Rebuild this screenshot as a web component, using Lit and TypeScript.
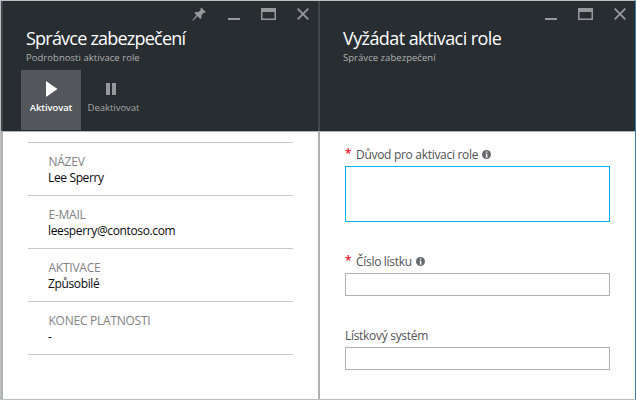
import { LitElement, html, css, svg, nothing } from "lit";
import { customElement, property } from "lit/decorators.js";

const glyphs = {
  pin: svg`<path d="M10.2 0.6 L14.8 5 L13.9 5.9 L13 5.6 L10.6 8 L10.3 11 L9.3 11.9 L6.5 9.3 L2.2 13.5 L1.4 13.6 L1.6 12.8 L5.4 8.2 L3.6 6 L4.4 5.1 L7.5 5.1 L9.9 2.7 L9.4 1.5 Z" fill="currentColor"/>`,
  min: svg`<path d="M2 11h12v2H2z" fill="currentColor"/>`,
  max: svg`<path fill-rule="evenodd" d="M0 1h15v12H0z M1.5 5v6.6h12V5z" fill="currentColor"/>`,
  close: svg`<path d="M1.7 1.7L12.3 12.3M12.3 1.7L1.7 12.3" stroke="currentColor" stroke-width="1.8" fill="none"/>`,
};

@customElement("window-icon")
class WindowIcon extends LitElement {
  @property() name: keyof typeof glyphs = "close";
  static styles = css`
    :host { display: block; width: 15px; height: 14px; color: #96999b; }
    svg { display: block; }
  `;
  render() {
    return html`<svg width="15" height="14" viewBox="0 0 15 14">${glyphs[this.name]}</svg>`;
  }
}

@customElement("blade-panel")
class BladePanel extends LitElement {
  @property() heading = "";
  @property() subheading = "";
  @property({ type: Boolean }) pinnable = false;
  static styles = css`
    :host { display: flex; flex-direction: column; min-width: 0; box-sizing: border-box; }
    header { height: 130px; background: #282d31; color: #fff; box-sizing: border-box; border-left: 2px solid #41474a; }
    .controls { display: flex; justify-content: flex-end; gap: 20px; height: 19px; padding: 6px 7px 0 0; box-sizing: border-box; }
    h1 { margin: 6px 0 0 23px; font-size: 18px; line-height: 25px; font-weight: 400; white-space: nowrap; letter-spacing: var(--title-spacing, -0.78px); }
    p { margin: 0 0 0 23px; font-size: 9.5px; line-height: 13px; height: 14px; color: #b0b2b3; white-space: nowrap; letter-spacing: 0.04px; }
    .body { flex: 1; border-top: 1px solid #aeafb1; border-left: 2px solid #b0b0b1; background: #fefefe; }
  `;
  render() {
    return html`
      <header>
        <div class="controls">
          ${this.pinnable ? html`<window-icon name="pin"></window-icon>` : nothing}
          <window-icon name="min"></window-icon>
          <window-icon name="max"></window-icon>
          <window-icon name="close"></window-icon>
        </div>
        <h1>${this.heading}</h1>
        <p>${this.subheading}</p>
        <slot name="toolbar"></slot>
      </header>
      <div class="body"><slot></slot></div>
    `;
  }
}

@customElement("form-field")
class FormField extends LitElement {
  @property() label = "";
  @property({ type: Boolean }) required = false;
  @property({ type: Boolean, reflect: true }) multiline = false;
  static styles = css`
    :host { display: block; }
    .label { display: flex; align-items: center; height: 18px; margin-bottom: 3px; font-size: 12px; color: #505254; white-space: nowrap; }
    .text { letter-spacing: -0.3px; }
    .star { width: 11px; color: #e81123; font-size: 12px; line-height: 16px; font-weight: 600; }
    svg { margin-left: 4px; }
    .box { display: block; width: 265px; height: 23px; box-sizing: border-box; margin: 0; padding: 2px 4px; border: 1px solid #afb0b1; border-radius: 0; background: #fefefe; outline: none; resize: none; font: inherit; }
    :host([multiline]) .box { height: 56px; border-color: #00b4ed; }
  `;
  render() {
    return html`
      <div class="label">
        ${this.required ? html`<span class="star">*</span>` : nothing}
        <span class="text">${this.label}</span>
        ${this.required
          ? html`<svg width="9" height="9" viewBox="0 0 9 9"><circle cx="4.5" cy="4.5" r="4.5" fill="#66696c"/><path d="M4 1.5h1.3v1.3H4zM3.5 3.7h1.8v3h.5v.8H3.5v-.8H4V4.5h-.5z" fill="#fff"/></svg>`
          : nothing}
      </div>
      ${this.multiline ? html`<textarea class="box"></textarea>` : html`<input class="box" />`}
    `;
  }
}

const details = [
  { label: "NÁZEV", value: "Lee Sperry" },
  { label: "E-MAIL", value: "leesperry@contoso.com" },
  { label: "AKTIVACE", value: "Způsobilé" },
  { label: "KONEC PLATNOSTI", value: "-" },
];

@customElement("app-root")
class AppRoot extends LitElement {
  static styles = css`
    :host { display: flex; width: 636px; height: 400px; box-sizing: border-box; overflow: hidden; background: #fefefe; border: solid #bcc0c0; border-width: 1px 0 1px 1px; border-right: 1px solid #3a80a0; font-family: "Open Sans", "Noto Sans", sans-serif; }
    .details { width: 317px; flex: none; }
    .request { flex: 1; --title-spacing: -0.58px; }
    .toolbar { display: flex; margin: 5px 0 0 18px; }
    .command { display: flex; flex-direction: column; align-items: center; width: 60px; height: 60px; padding-top: 10px; box-sizing: border-box; font-size: 9.5px; line-height: 14px; color: #a4a7a9; white-space: nowrap; }
    .command svg { display: block; margin-bottom: 3px; }
    .active { background: #53565a; color: #fff; font-weight: 600; letter-spacing: -0.1px; }
    .second { margin-left: 2.5px; letter-spacing: -0.03px; }
    .second svg { margin-right: 5px; }
    .rows { margin: 10px 25px 0 25px; border-top: 1px solid #c9c9c9; }
    .row { height: 53px; box-sizing: border-box; border-bottom: 1px solid #c9c9c9; padding: 11px 0 0 20px; font-size: 12px; line-height: 16px; color: #0a0a0a; white-space: nowrap; }
    .caption { color: #838383; padding-left: 0.5px; letter-spacing: -0.25px; }
    .value { letter-spacing: -0.36px; }
    .form { display: flex; flex-direction: column; padding: 13px 0 0 25px; }
    .form form-field + form-field { margin-top: 30px; }
  `;
  render() {
    return html`
      <blade-panel class="details" heading="Správce zabezpečení" subheading="Podrobnosti aktivace role" pinnable>
        <div class="toolbar" slot="toolbar">
          <div class="command active">
            <svg width="14" height="18" viewBox="0 0 14 18"><path d="M2 1L13.5 9L2 17Z" fill="#fff"/></svg>
            <span>Aktivovat</span>
          </div>
          <div class="command second">
            <svg width="14" height="18" viewBox="0 0 14 18"><path d="M2 3h4v12H2zM8 3h4v12H8z" fill="#96999b"/></svg>
            <span>Deaktivovat</span>
          </div>
        </div>
        <div class="rows">
          ${details.map((d) => html`<div class="row"><div class="caption">${d.label}</div><div class="value">${d.value}</div></div>`)}
        </div>
      </blade-panel>
      <blade-panel class="request" heading="Vyžádat aktivaci role" subheading="Správce zabezpečení">
        <div class="form">
          <form-field label="Důvod pro aktivaci role" required multiline></form-field>
          <form-field label="Číslo lístku" required></form-field>
          <form-field label="Lístkový systém"></form-field>
        </div>
      </blade-panel>
    `;
  }
}
